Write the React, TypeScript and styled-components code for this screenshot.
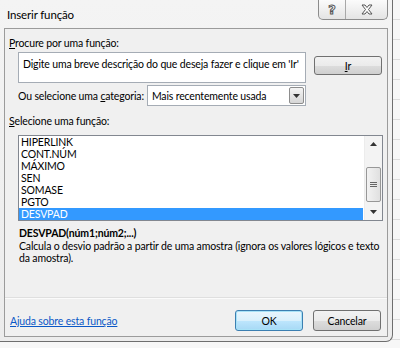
import styled, { createGlobalStyle, css } from "styled-components";

const GlobalStyle = createGlobalStyle`
    html, body {
        margin: 0;
        padding: 0;
    }
    body {
        font-family: Lato, "Noto Sans", Arial, sans-serif;
        font-size: 10.5px;
        letter-spacing: -0.15px;
        color: #000;
    }
`;

const Page = styled.div`
    width: 400px;
    height: 348px;
    background-color: #f7f7f7;
    background-image: repeating-linear-gradient(
        to bottom,
        transparent 0,
        transparent 19px,
        #dcdcdc 19px,
        #dcdcdc 20px
    );
    overflow: hidden;
`;

const Window = styled.div`
    width: 393px;
    height: 342px;
    display: flex;
    flex-direction: column;
    background: linear-gradient(to bottom, #f4f4f4, #ececec);
    border: 1px solid #6e6e6e;
    border-top: none;
    border-left: none;
    border-radius: 0 0 7px 0;
    box-sizing: border-box;
`;

const TitleBar = styled.div`
    height: 28px;
    display: flex;
    align-items: flex-start;
    flex-shrink: 0;
`;

const Title = styled.span`
    margin-top: 8px;
    margin-left: 7px;
    font-size: 11.5px;
`;

const CaptionButtons = styled.div`
    margin-left: auto;
    margin-right: 4px;
    display: flex;
    height: 19px;
    border: 1px solid #8c8c8c;
    border-top: none;
    border-radius: 0 0 5px 5px;
    background: linear-gradient(to bottom, #fbfbfb, #e4e4e4);
    overflow: hidden;
`;

const CaptionButton = styled.div<{ wide?: boolean }>`
    width: ${(p) => (p.wide ? "41px" : "26px")};
    display: flex;
    align-items: center;
    justify-content: center;

    & + & {
        border-left: 1px solid #a8a8a8;
    }
`;

const HelpGlyph = styled.span`
    font-family: "DejaVu Sans", sans-serif;
    font-size: 13px;
    font-weight: bold;
    color: #fdfdfd;
    -webkit-text-stroke: 1px #555;
    line-height: 1;
`;

const Panel = styled.div`
    flex: 1;
    margin: 0 4px 4px 4px;
    background: #f0f0f0;
    border: 1px solid #9b9b9b;
    display: flex;
    flex-direction: column;
    padding: 7px 0 0 4px;
`;

const Label = styled.div`
    line-height: 14px;
`;

const Key = styled.span`
    text-decoration: underline;
`;

const SearchRow = styled.div`
    display: flex;
    align-items: flex-start;
    margin-top: 2px;
    margin-left: 9px;
`;

const SearchBox = styled.div`
    width: 288px;
    height: 31px;
    background: #fff;
    border: 1px solid #a5acb5;
    padding: 5px 0 0 4px;
    box-sizing: border-box;
    white-space: nowrap;
    overflow: hidden;
`;

const Button = styled.div<{ focused?: boolean }>`
    width: 68px;
    height: 21px;
    box-sizing: border-box;
    display: flex;
    align-items: center;
    justify-content: center;
    border: 1px solid #707070;
    border-radius: 3px;
    background: linear-gradient(to bottom, #f2f2f2 0%, #ebebeb 50%, #dddddd 51%, #cfcfcf 100%);

    ${(p) =>
        p.focused &&
        css`
            border-color: #3c7fb1;
            box-shadow: inset 0 0 0 1px #a8e2f7;
            background: linear-gradient(to bottom, #eaf6fd 0%, #d9f0fc 50%, #bee6fd 51%, #a7d9f5 100%);
        `}
`;

const GoButton = styled(Button)`
    margin-left: 8px;
    margin-top: 4px;
    height: 19px;
`;

const CategoryRow = styled.div`
    display: flex;
    align-items: center;
    margin-top: 2px;
    margin-left: 9px;
    gap: 3px;
`;

const Combo = styled.div`
    width: 159px;
    height: 21px;
    box-sizing: border-box;
    background: #fff;
    border: 1px solid #a5acb5;
    display: flex;
    align-items: center;
    padding-left: 4px;
`;

const ComboText = styled.span`
    flex: 1;
`;

const ComboArrow = styled.div`
    width: 15px;
    height: 17px;
    margin-right: 1px;
    box-sizing: border-box;
    border: 1px solid #8d8d8d;
    border-radius: 2px;
    background: linear-gradient(to bottom, #f4f4f4, #d6d6d6);
    display: flex;
    align-items: center;
    justify-content: center;
`;

const SectionLabel = styled(Label)`
    margin-top: 8px;
`;

const ListBox = styled.div`
    margin-top: 7px;
    margin-left: 9px;
    width: 365px;
    height: 86px;
    box-sizing: border-box;
    background: #fff;
    border: 1px solid #828790;
    display: flex;
    overflow: hidden;
`;

const Items = styled.div`
    flex: 1;
    padding-top: 0;
`;

const Item = styled.div<{ selected?: boolean }>`
    height: 12px;
    line-height: 12px;
    padding-left: 2px;
    margin-right: 1px;
    ${(p) =>
        p.selected &&
        css`
            background: #3399ff;
            color: #fff;
        `}
`;

const ScrollBar = styled.div`
    width: 17px;
    display: flex;
    flex-direction: column;
    align-items: center;
    background: #f3f3f3;
    border-left: 1px solid #ececec;
`;

const ScrollArrow = styled.div`
    height: 16px;
    display: flex;
    align-items: center;
    justify-content: center;
`;

const ScrollTrack = styled.div`
    flex: 1;
    width: 100%;
    display: flex;
    flex-direction: column;
    justify-content: flex-end;
    padding-bottom: 2px;
    box-sizing: border-box;
`;

const Thumb = styled.div`
    height: 33px;
    margin: 0 1px;
    border: 1px solid #979797;
    border-radius: 2px;
    background: linear-gradient(to right, #f2f2f2, #e0e0e0);
    display: flex;
    align-items: center;
    justify-content: center;
`;

const Signature = styled.div`
    margin-top: 5px;
    margin-left: 10px;
    font-weight: bold;
    line-height: 14px;
`;

const Description = styled.div`
    margin-left: 10px;
    margin-top: 0;
    line-height: 12px;
    width: 372px;
`;

const Separator = styled.div`
    margin-top: auto;
    margin-left: -4px;
    height: 1px;
    background: #dfdfdf;
    border-bottom: 1px solid #fbfbfb;
`;

const Footer = styled.div`
    height: 37px;
    box-sizing: border-box;
    padding: 6px 6px 0 1px;
    display: flex;
    align-items: center;
    gap: 10px;
`;

const HelpLink = styled.a`
    color: #0a58c7;
    text-decoration: underline;
    margin-right: auto;
    cursor: pointer;
`;

const functions = ["HIPERLINK", "CONT.NÚM", "MÁXIMO", "SEN", "SOMASE", "PGTO", "DESVPAD"];

function CloseIcon() {
    return (
        <svg width="12" height="11" viewBox="0 0 12 11">
            <path
                d="M1 1h3l2 2.5L8 1h3L7.5 5.5 11 10H8L6 7.5 4 10H1l3.5-4.5z"
                fill="#fdfdfd"
                stroke="#555"
                strokeWidth="1"
                strokeLinejoin="round"
            />
        </svg>
    );
}

function Triangle({ up }: { up?: boolean }) {
    return (
        <svg width="7" height="4" viewBox="0 0 7 4">
            <path d={up ? "M0 4h7L3.5 0z" : "M0 0h7L3.5 4z"} fill="#333" />
        </svg>
    );
}

function Grip() {
    return (
        <svg width="7" height="7" viewBox="0 0 7 7">
            <path d="M0 1.5h7M0 3.5h7M0 5.5h7" stroke="#666" strokeWidth="1" />
        </svg>
    );
}

export default function App() {
    return (
        <>
            <GlobalStyle />
            <Page>
                <Window>
                    <TitleBar>
                        <Title>Inserir função</Title>
                        <CaptionButtons>
                            <CaptionButton>
                                <HelpGlyph>?</HelpGlyph>
                            </CaptionButton>
                            <CaptionButton wide>
                                <CloseIcon />
                            </CaptionButton>
                        </CaptionButtons>
                    </TitleBar>
                    <Panel>
                        <Label>
                            <Key>P</Key>rocure por uma função:
                        </Label>
                        <SearchRow>
                            <SearchBox>Digite uma breve descrição do que deseja fazer e clique em 'Ir'</SearchBox>
                            <GoButton>
                                <Key>I</Key>r
                            </GoButton>
                        </SearchRow>
                        <CategoryRow>
                            <span>
                                Ou selecione uma <Key>c</Key>ategoria:
                            </span>
                            <Combo>
                                <ComboText>Mais recentemente usada</ComboText>
                                <ComboArrow>
                                    <Triangle />
                                </ComboArrow>
                            </Combo>
                        </CategoryRow>
                        <SectionLabel>
                            <Key>S</Key>elecione uma função:
                        </SectionLabel>
                        <ListBox>
                            <Items>
                                {functions.map((name) => (
                                    <Item key={name} selected={name === "DESVPAD"}>
                                        {name}
                                    </Item>
                                ))}
                            </Items>
                            <ScrollBar>
                                <ScrollArrow>
                                    <Triangle up />
                                </ScrollArrow>
                                <ScrollTrack>
                                    <Thumb>
                                        <Grip />
                                    </Thumb>
                                </ScrollTrack>
                                <ScrollArrow>
                                    <Triangle />
                                </ScrollArrow>
                            </ScrollBar>
                        </ListBox>
                        <Signature>DESVPAD(núm1;núm2;...)</Signature>
                        <Description>
                            Calcula o desvio padrão a partir de uma amostra (ignora os valores lógicos e texto da
                            amostra).
                        </Description>
                        <Separator />
                        <Footer>
                            <HelpLink>Ajuda sobre esta função</HelpLink>
                            <Button focused>OK</Button>
                            <Button>Cancelar</Button>
                        </Footer>
                    </Panel>
                </Window>
            </Page>
        </>
    );
}
